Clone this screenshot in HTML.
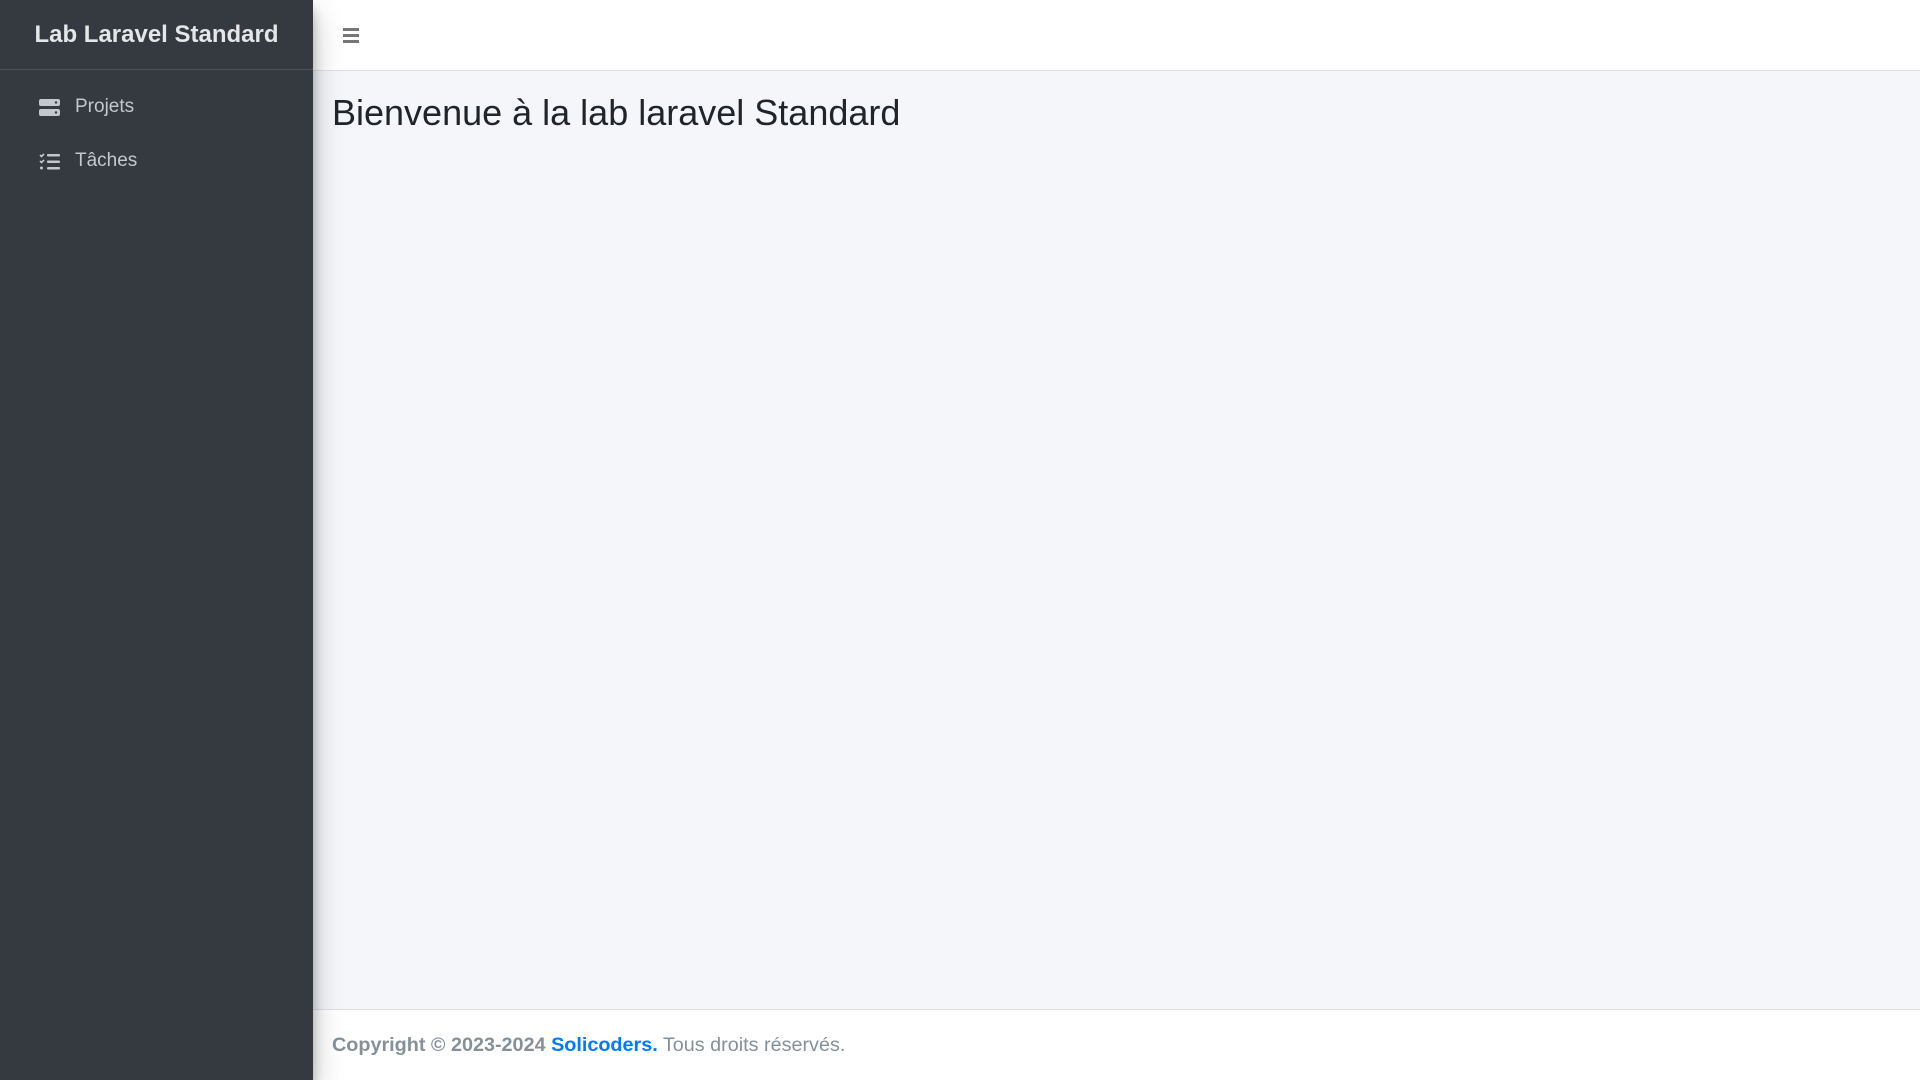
<!DOCTYPE html>
<html><head><meta charset="utf-8"><style>
*{margin:0;padding:0;box-sizing:border-box}
body{width:1920px;height:1080px;overflow:hidden;background:#f4f6f9;font-family:"Liberation Sans",sans-serif;position:relative}
.side{position:absolute;left:0;top:0;width:313px;height:1080px;background:#343a40;box-shadow:0 14px 28px rgba(0,0,0,.25),0 10px 10px rgba(0,0,0,.22);z-index:2}
.brand{height:70px;border-bottom:1px solid #4b545c;color:#e4e6e8;font-weight:bold;font-size:24px;text-align:center;line-height:70px}
.nav{padding-top:10px}
.item{height:54px;display:flex;align-items:center;padding-left:39px;color:#c2c7d0;font-size:19px}
.item svg{margin-right:15px}
.top{position:absolute;left:313px;top:0;right:0;height:71px;background:#fff;border-bottom:1px solid #dee2e6}
.ham{position:absolute;left:30px;top:28px;width:16px}
.ham i{display:block;height:3px;background:#777;margin-bottom:3px}
h1{position:absolute;left:332px;top:92px;font-weight:normal;font-size:36px;color:#212529}
.foot{position:absolute;left:313px;top:1009px;right:0;bottom:0;background:#fff;border-top:1px solid #dee2e6;color:#869099;font-size:19.8px;padding-left:19px;line-height:70px}
.foot b{color:#869099}.foot a{color:#007bff;font-weight:bold;text-decoration:none}
</style></head><body>
<div class="side">
<div class="brand">Lab Laravel Standard</div>
<div class="nav">
<div class="item"><svg width="21" height="17" viewBox="0 0 21 17"><rect x="0" y="0" width="21" height="7" rx="2" fill="#c2c7d0"/><rect x="0" y="10" width="21" height="7" rx="2" fill="#c2c7d0"/><circle cx="17" cy="3.5" r="1.2" fill="#343a40"/><circle cx="17" cy="13.5" r="1.2" fill="#343a40"/></svg>Projets</div>
<div class="item"><svg width="21" height="17" viewBox="0 0 21 17"><path d="M1 2l1.5 1.5L5 1M1 8l1.5 1.5L5 7" stroke="#c2c7d0" stroke-width="1.6" fill="none"/><circle cx="2.5" cy="15" r="1.5" fill="#c2c7d0"/><rect x="8" y="1" width="13" height="2.5" rx="1" fill="#c2c7d0"/><rect x="8" y="7.5" width="13" height="2.5" rx="1" fill="#c2c7d0"/><rect x="8" y="14" width="13" height="2.5" rx="1" fill="#c2c7d0"/></svg>Tâches</div>
</div></div>
<div class="top"><div class="ham"><i></i><i></i><i></i></div></div>
<h1>Bienvenue à la lab laravel Standard</h1>
<div class="foot"><b>Copyright © 2023-2024 <a>Solicoders.</a></b> Tous droits réservés.</div>
</body></html>
